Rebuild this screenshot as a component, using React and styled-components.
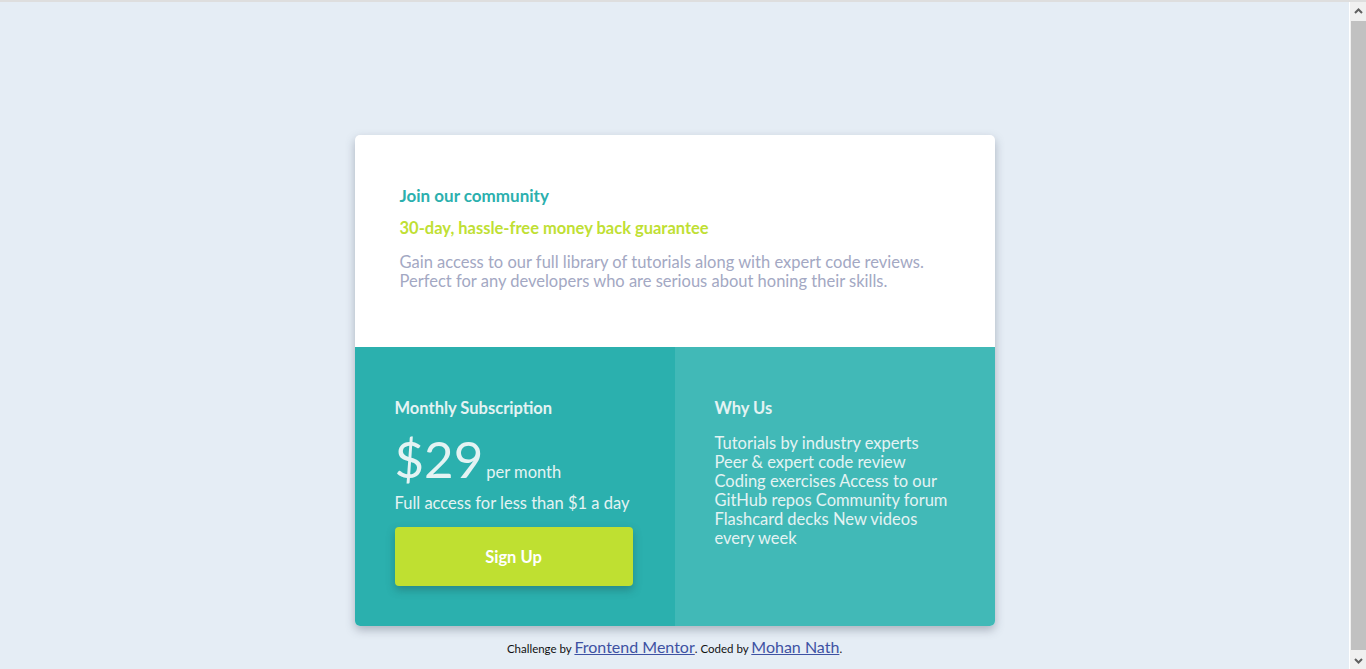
import React from "react";
import styled, { createGlobalStyle } from "styled-components";

const GlobalStyle = createGlobalStyle`
  html, body {
    margin: 0;
    padding: 0;
  }
  body {
    background: #e5edf5;
    font-family: Lato, "Noto Sans", sans-serif;
    border-top: 2px solid #dedede;
    padding-right: 17px;
  }
`;

const Page = styled.main`
  display: flex;
  flex-direction: column;
  align-items: center;
  padding: 133px 0 16px;
`;

const Card = styled.section`
  width: 640px;
  border-radius: 5px;
  overflow: hidden;
  background: #fff;
  box-shadow: 0 4px 10px rgba(60, 70, 90, 0.35);
`;

const Intro = styled.div`
  height: 212px;
  box-sizing: border-box;
  padding: 51px 45px 0;
`;

const Heading = styled.h1`
  margin: 0;
  font-size: 17px;
  font-weight: 700;
  color: ${(p) => p.color};
  line-height: 20px;
`;

const Guarantee = styled(Heading)`
  margin-top: 12px;
  font-size: 16.5px;
`;

const Text = styled.p`
  margin: 15px 0 0;
  font-size: 16.5px;
  line-height: 19px;
  color: #a3a8c3;
`;

const Split = styled.div`
  display: grid;
  grid-template-columns: 1fr 1fr;
  height: 279px;
`;

const Panel = styled.div`
  background: ${(p) => p.bg};
  padding: 51px 40px 0;
  color: #e4f3f3;
`;

const PanelTitle = styled.h2`
  margin: 0;
  font-size: 16.5px;
  font-weight: 700;
  line-height: 20px;
`;

const PriceRow = styled.div`
  display: flex;
  align-items: baseline;
  gap: 3px;
  margin-top: 17px;
  height: 48px;
`;

const Price = styled.span`
  font-size: 51px;
  font-weight: 400;
  line-height: 48px;
`;

const Per = styled.span`
  font-size: 16.5px;
`;

const Small = styled.div`
  margin-top: 10px;
  font-size: 16.5px;
  line-height: 20px;
`;

const SignUp = styled.button`
  display: block;
  width: 238px;
  height: 59px;
  margin-top: 14px;
  border: none;
  border-radius: 4px;
  background: #bfe031;
  color: #fff;
  font-family: inherit;
  font-size: 16.5px;
  font-weight: 700;
  box-shadow: 0 4px 8px rgba(30, 90, 90, 0.45);
  cursor: pointer;
`;

const Features = styled.ul`
  list-style: none;
  margin: 16px 0 0;
  padding: 0;
  font-size: 16.5px;
  line-height: 19px;
`;

const Feature = styled.li`
  white-space: nowrap;
`;

const Footer = styled.footer`
  margin-top: 11px;
  font-size: 11.5px;
  line-height: 20px;
  color: #111;
  text-align: center;
`;

const FooterLink = styled.a`
  font-size: 16px;
  color: #3e52a3;
`;

// fake browser scrollbar seen in the screenshot
const ScrollRail = styled.div`
  position: fixed;
  top: 2px;
  right: 0;
  bottom: 0;
  width: 16px;
  border-left: 1px solid #fff;
  background: #f0f0f0;
  display: flex;
  flex-direction: column;
  align-items: center;
`;

const RailArrow = styled.div`
  height: 17px;
  width: 100%;
  display: flex;
  align-items: center;
  justify-content: center;
`;

const Thumb = styled.div`
  flex: 1;
  width: 15px;
  margin: 2px 0;
  background: #c1c1c1;
`;

const Arrow = ({ down }) => (
  <svg width="9" height="6" viewBox="0 0 9 6">
    <path
      d={down ? "M1 1 L4.5 4.5 L8 1" : "M1 5 L4.5 1.5 L8 5"}
      fill="none"
      stroke="#606060"
      strokeWidth="2"
    />
  </svg>
);

const featureLines = [
  "Tutorials by industry experts",
  "Peer & expert code review",
  "Coding exercises Access to our",
  "GitHub repos Community forum",
  "Flashcard decks New videos",
  "every week",
];

export default function App() {
  return (
    <>
      <GlobalStyle />
      <Page>
        <Card>
          <Intro>
            <Heading color="#2bb0ae">Join our community</Heading>
            <Guarantee color="#c0df34">30-day, hassle-free money back guarantee</Guarantee>
            <Text>
              Gain access to our full library of tutorials along with expert code reviews.
              <br />
              Perfect for any developers who are serious about honing their skills.
            </Text>
          </Intro>
          <Split>
            <Panel bg="#2bb0ae">
              <PanelTitle>Monthly Subscription</PanelTitle>
              <PriceRow>
                <Price>$29</Price>
                <Per>per month</Per>
              </PriceRow>
              <Small>Full access for less than $1 a day</Small>
              <SignUp>Sign Up</SignUp>
            </Panel>
            <Panel bg="#41b9b7">
              <PanelTitle>Why Us</PanelTitle>
              <Features>
                {featureLines.map((line) => (
                  <Feature key={line}>{line}</Feature>
                ))}
              </Features>
            </Panel>
          </Split>
        </Card>
        <Footer>
          Challenge by <FooterLink href="#">Frontend Mentor</FooterLink>. Coded by{" "}
          <FooterLink href="#">Mohan Nath</FooterLink>.
        </Footer>
      </Page>
      <ScrollRail>
        <RailArrow>
          <Arrow />
        </RailArrow>
        <Thumb />
        <RailArrow>
          <Arrow down />
        </RailArrow>
      </ScrollRail>
    </>
  );
}
